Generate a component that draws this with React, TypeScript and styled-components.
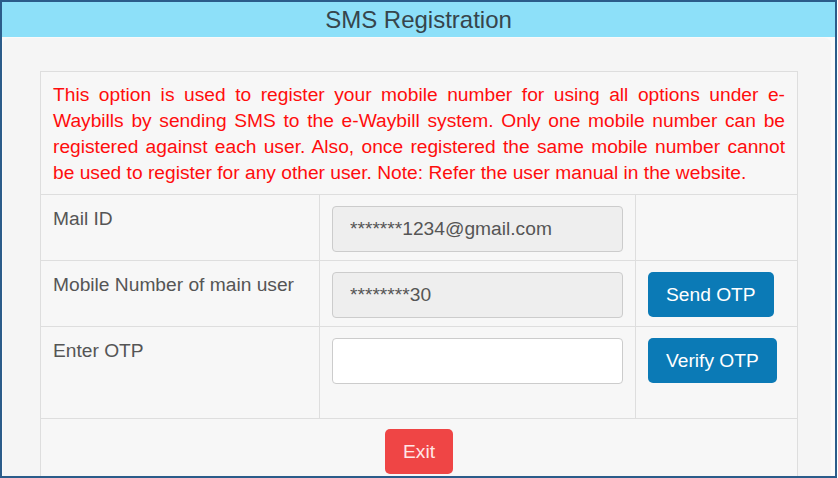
import React from "react";
import styled, { createGlobalStyle } from "styled-components";

const GlobalStyle = createGlobalStyle`
  html, body { margin: 0; padding: 0; background: #ffffff; }
  body { font-family: "Liberation Sans", Arial, sans-serif; }
  * { box-sizing: border-box; }
`;

const Frame = styled.div`
  width: 837px;
  height: 478px;
  border: 2px solid #2b5c8a;
  background: #fafafa;
  display: flex;
  flex-direction: column;
  overflow: hidden;
`;

const Header = styled.div`
  height: 35px;
  flex: none;
  background: #8de0f9;
  display: flex;
  align-items: center;
  justify-content: center;
  font-size: 24px;
  color: #36454c;
`;

const Panel = styled.div`
  flex: 1;
  margin: 1px 4px 0 1px;
  background: #f5f5f5;
  border-radius: 6px 6px 0 0;
  padding: 33px 33px 0 37px;
`;

const Table = styled.div`
  width: 758px;
  display: grid;
  grid-template-columns: 279px 316px 162px;
  border-top: 1px solid #dedede;
  border-left: 1px solid #dedede;
  background: #f7f7f7;
`;

const Cell = styled.div<{ $span?: number; $minH?: number }>`
  grid-column: span ${(p) => p.$span ?? 1};
  border-right: 1px solid #dedede;
  border-bottom: 1px solid #dedede;
  padding: 11px 12px 8px;
  min-height: ${(p) => (p.$minH ? `${p.$minH}px` : "auto")};
  font-size: 19.2px;
  line-height: 26px;
`;

const Notice = styled(Cell)`
  padding: 10px 12px 8px;
  color: #ff0d0d;
`;

const NoticeLine = styled.span<{ $last?: boolean }>`
  display: block;
  text-align: ${(p) => (p.$last ? "left" : "justify")};
  text-align-last: ${(p) => (p.$last ? "left" : "justify")};
  white-space: nowrap;
`;

const Label = styled(Cell)`
  color: #555555;
`;

const Input = styled.input<{ $readOnlyLook?: boolean }>`
  display: block;
  width: 100%;
  height: 46px;
  border: 1px solid #cccccc;
  border-radius: 4px;
  background: ${(p) => (p.$readOnlyLook ? "#eeeeee" : "#ffffff")};
  color: #555555;
  font-family: "Liberation Sans", Arial, sans-serif;
  font-size: 19.2px;
  padding: 0 17px;
  outline: none;
`;

const Button = styled.button<{ $variant: "primary" | "danger" }>`
  height: 45px;
  padding: 0 18px;
  border: none;
  border-radius: 5px;
  font-family: "Liberation Sans", Arial, sans-serif;
  font-size: 19.2px;
  color: ${(p) => (p.$variant === "primary" ? "#ffffff" : "#ffe6e6")};
  background: ${(p) => (p.$variant === "primary" ? "#0b7ab6" : "#ef4545")};
  cursor: pointer;
`;

const Footer = styled(Cell)`
  display: flex;
  justify-content: center;
  padding: 10px 12px;
`;

const noticeLines = [
  "This option is used to register your mobile number for using all options under e-",
  "Waybills by sending SMS to the e-Waybill system. Only one mobile number can be",
  "registered against each user. Also, once registered the same mobile number cannot",
  "be used to register for any other user. Note: Refer the user manual in the website.",
];

export default function App() {
  return (
    <>
      <GlobalStyle />
      <Frame>
        <Header>SMS Registration</Header>
        <Panel>
          <Table>
            <Notice $span={3}>
              {noticeLines.map((line, i) => (
                <NoticeLine key={i} $last={i === noticeLines.length - 1}>
                  {line}
                </NoticeLine>
              ))}
            </Notice>

            <Label>Mail ID</Label>
            <Cell>
              <Input $readOnlyLook readOnly value="*******1234@gmail.com" />
            </Cell>
            <Cell />

            <Label>Mobile Number of main user</Label>
            <Cell>
              <Input $readOnlyLook readOnly value="********30" />
            </Cell>
            <Cell>
              <Button $variant="primary">Send OTP</Button>
            </Cell>

            <Label $minH={92}>Enter OTP</Label>
            <Cell $minH={92}>
              <Input defaultValue="" />
            </Cell>
            <Cell $minH={92}>
              <Button $variant="primary">Verify OTP</Button>
            </Cell>

            <Footer $span={3}>
              <Button $variant="danger">Exit</Button>
            </Footer>
          </Table>
        </Panel>
      </Frame>
    </>
  );
}
